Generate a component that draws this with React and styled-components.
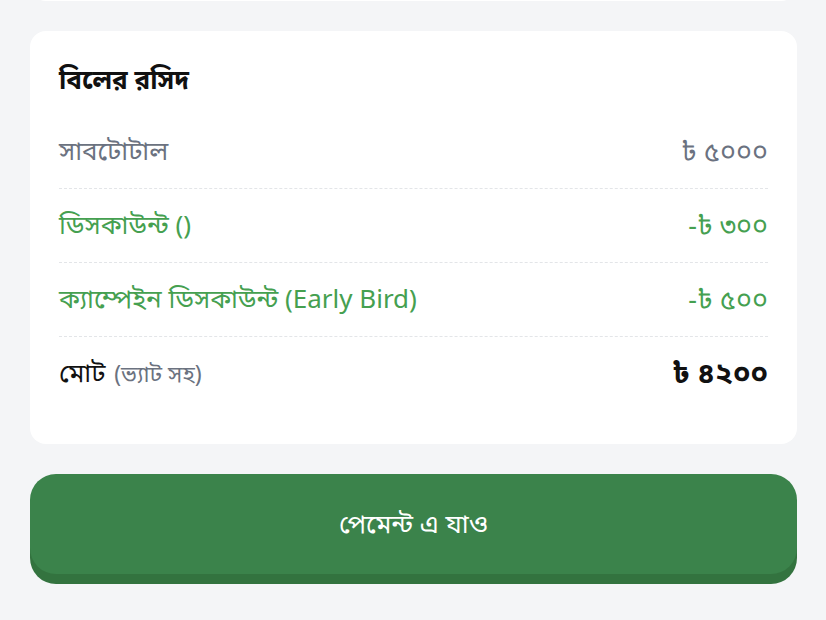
import React from "react";
import styled, { createGlobalStyle } from "styled-components";

const GlobalStyle = createGlobalStyle`
  html, body {
    margin: 0;
    padding: 0;
    background: #f4f5f7;
    font-family: "Noto Sans", "Noto Sans Bengali", sans-serif;
  }
`;

const Page = styled.div`
  display: flex;
  flex-direction: column;
  gap: 30px;
  padding: 0 29px 40px 30px;
`;

const PrevCard = styled.div`
  height: 60px;
  margin-top: -59px;
  background: #fff;
  border-radius: 16px;
`;

const Card = styled.div`
  background: #fff;
  border-radius: 16px;
  padding: 28px 29px 33px;
  display: flex;
  flex-direction: column;
`;

const Title = styled.h2`
  margin: 0 0 16px;
  font-size: 26px;
  font-weight: 700;
  color: #111;
  line-height: 40px;
`;

const Row = styled.div`
  display: flex;
  justify-content: space-between;
  align-items: center;
  height: 73px;
  border-bottom: 1px dashed ${(p) => (p.$last ? "transparent" : "#e3e5e8")};
  color: ${(p) => p.$color};
  font-size: 26px;
`;

const Label = styled.span``;

const Note = styled.span`
  font-size: 23px;
  color: #6b7280;
  margin-left: 2px;
`;

const Amount = styled.span`
  font-weight: ${(p) => (p.$bold ? 700 : 400)};
  font-size: ${(p) => (p.$bold ? "29px" : "27px")};
`;

const PayButton = styled.button`
  height: 100px;
  border: none;
  border-radius: 26px;
  background: #3b834b;
  box-shadow: 0 10px 0 #33733f;
  color: #fff;
  font-family: inherit;
  font-size: 26px;
`;

const rows = [
  { label: "সাবটোটাল", amount: "৳ ৫০০০", color: "#6b7280" },
  { label: "ডিসকাউন্ট ()", amount: "-৳ ৩০০", color: "#45a050" },
  { label: "ক্যাম্পেইন ডিসকাউন্ট (Early Bird)", amount: "-৳ ৫০০", color: "#45a050" },
];

export default function App() {
  return (
    <>
      <GlobalStyle />
      <Page>
        <PrevCard />
        <Card>
          <Title>বিলের রসিদ</Title>
          {rows.map((r) => (
            <Row key={r.label} $color={r.color}>
              <Label>{r.label}</Label>
              <Amount>{r.amount}</Amount>
            </Row>
          ))}
          <Row $color="#111" $last>
            <Label>
              মোট <Note>(ভ্যাট সহ)</Note>
            </Label>
            <Amount $bold>৳ ৪২০০</Amount>
          </Row>
        </Card>
        <PayButton>পেমেন্ট এ যাও</PayButton>
      </Page>
    </>
  );
}
